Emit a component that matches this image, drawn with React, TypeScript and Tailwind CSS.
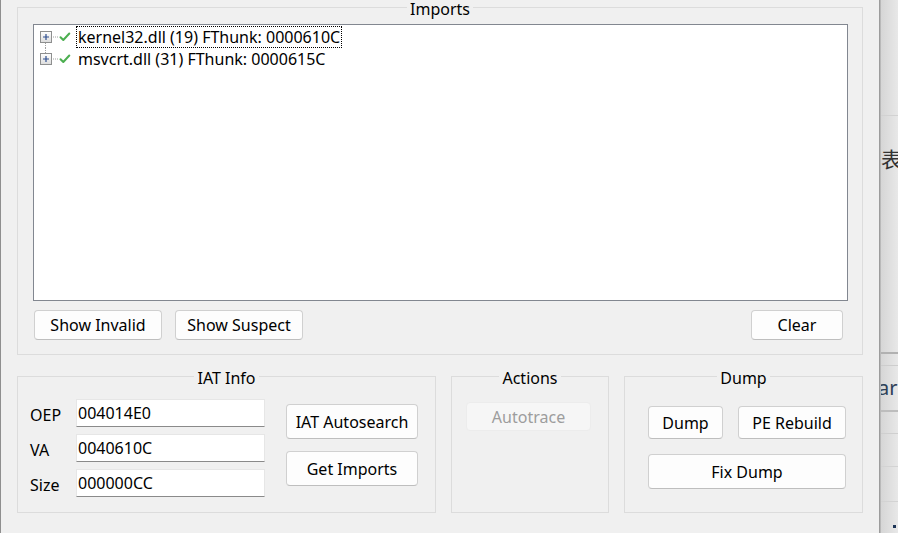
import React from 'react';

const font = "font-['Noto_Sans','Liberation_Sans',sans-serif]";

const btn =
  'flex items-center justify-center rounded-[4px] border border-[#d0d0d0] border-b-[#bebebe] bg-[#fdfdfd] text-black';

const Legend: React.FC<{ title: string }> = ({ title }) => (
  <legend className="mx-auto px-[3px] leading-[14px]">
    <span className="relative top-[2px]">{title}</span>
  </legend>
);

const TreeGlyph: React.FC<{ first: boolean; last: boolean }> = ({ first, last }) => (
  <svg width="36" height="22" viewBox="0 0 36 22" className="shrink-0 overflow-visible">
    <defs>
      <linearGradient id="pb" x1="0" y1="0" x2="0" y2="1">
        <stop offset="0" stopColor="#ffffff" />
        <stop offset="1" stopColor="#dcdcdc" />
      </linearGradient>
    </defs>
    {!first && <line x1="5.5" y1="0" x2="5.5" y2="5.5" stroke="#a0a0a0" strokeDasharray="1 1" />}
    {!last && <line x1="5.5" y1="17" x2="5.5" y2="22" stroke="#a0a0a0" strokeDasharray="1 1" />}
    <rect x="0.5" y="5.5" width="11" height="11" fill="url(#pb)" stroke="#8e8f8f" />
    <path d="M3 11h6M6 8v6" stroke="#2f4f8f" strokeWidth="1.2" />
    <line x1="13" y1="11" x2="18" y2="11" stroke="#a0a0a0" strokeDasharray="1 1" />
    <path d="M20.5 11.2l2.8 2.8 6-6.5" fill="none" stroke="#4caf50" strokeWidth="2" strokeLinecap="round" strokeLinejoin="round" />
  </svg>
);

const App: React.FC = () => {
  const fields = [
    { label: 'OEP', value: '004014E0' },
    { label: 'VA', value: '0040610C' },
    { label: 'Size', value: '000000CC' },
  ];

  return (
    <div className={`flex h-[533px] w-[898px] overflow-hidden bg-[#f0f0f0] text-[16px] text-black ${font}`}>
      <div className="w-px shrink-0 bg-[#8f8f8f]" />

      {/* dialog */}
      <div className="flex w-[878px] shrink-0 flex-col px-[16px]">
        <fieldset className="border border-[#dcdcdc] pt-[10px] pb-[14px]">
          <Legend title="Imports" />
          <div className="pl-[15px] pr-[14px]">
            <div className="h-[277px] border border-[#828790] bg-white pt-[1px]">
              <div className="flex h-[22px] items-center pl-[6px]">
                <TreeGlyph first last={false} />
                <span className="border border-dotted border-black px-[1px] leading-[20px]">
                  kernel32.dll (19) FThunk: 0000610C
                </span>
              </div>
              <div className="flex h-[22px] items-center pl-[6px]">
                <TreeGlyph first={false} last />
                <span className="border border-transparent px-[1px] leading-[20px]">
                  msvcrt.dll (31) FThunk: 0000615C
                </span>
              </div>
            </div>
            <div className="mt-[9px] flex pl-[1px] pr-[5px]">
              <button className={`${btn} h-[30px] w-[128px]`}>Show Invalid</button>
              <button className={`${btn} ml-[13px] h-[30px] w-[128px]`}>Show Suspect</button>
              <button className={`${btn} ml-auto h-[30px] w-[92px]`}>Clear</button>
            </div>
          </div>
        </fieldset>

        <div className="mt-[14px] flex gap-[15px]">
          <fieldset className="h-[144px] w-[419px] border border-[#dcdcdc] pt-[16px]">
            <Legend title="IAT Info" />
            <div className="flex pl-[12px]">
              <div className="flex flex-col gap-[7px]">
                {fields.map((f) => (
                  <div key={f.label} className="flex h-[28px] items-center">
                    <span className="w-[46px] pt-[4px]">{f.label}</span>
                    <div className="flex h-[28px] w-[189px] items-center border border-[#e6e6e6] border-b-[#8a8a8a] bg-white pl-[1px]">
                      {f.value}
                    </div>
                  </div>
                ))}
              </div>
              <div className="ml-[21px] mt-[5px] flex flex-col gap-[12px]">
                <button className={`${btn} h-[35px] w-[132px]`}>IAT Autosearch</button>
                <button className={`${btn} h-[35px] w-[132px]`}>Get Imports</button>
              </div>
            </div>
          </fieldset>

          <fieldset className="h-[144px] w-[158px] border border-[#dcdcdc] pt-[19px]">
            <Legend title="Actions" />
            <div className="pl-[14px]">
              <button className="flex h-[29px] w-[125px] items-center justify-center rounded-[4px] border border-[#ececec] bg-[#f6f6f6] text-[#9d9d9d]">
                Autotrace
              </button>
            </div>
          </fieldset>

          <fieldset className="h-[144px] w-[239px] border border-[#dcdcdc] pt-[23px]">
            <Legend title="Dump" />
            <div className="pl-[23px]">
              <div className="flex gap-[15px]">
                <button className={`${btn} h-[33px] w-[75px]`}>Dump</button>
                <button className={`${btn} h-[33px] w-[108px]`}>PE Rebuild</button>
              </div>
              <button className={`${btn} mt-[15px] h-[35px] w-[198px]`}>Fix Dump</button>
            </div>
          </fieldset>
        </div>
      </div>

      {/* window edge */}
      <div className="w-px shrink-0 bg-[#9c9c9c]" />
      <div className="w-px shrink-0 bg-[#b9b9b9]" />

      {/* background window */}
      <div className="flex w-[17px] shrink-0 flex-col overflow-hidden bg-gradient-to-r from-[#d6d6d6] to-[#e8e8e8] text-[#2d3f57]">
        <div className="h-[116px] shrink-0 border-b border-[#d2d2d2]" />
        <div className="h-[236px] shrink-0 whitespace-nowrap pt-[29px] text-[21px] leading-[26px] font-['Noto_Sans_CJK_SC',sans-serif] text-[#333]">
          表
        </div>
        <div className="h-[14px] shrink-0 border-t-2 border-b border-t-[#b1b1b1] border-b-[#cdcdcd]" />
        <div className="-ml-[3px] h-[46px] shrink-0 whitespace-nowrap border-b-2 border-[#bdbdbd] pt-[11px] text-[20px] leading-[22px]">
          ar
        </div>
        <div className="h-[22px] shrink-0 border-b border-[#cfcfcf]" />
        <div className="h-[33px] shrink-0 border-b border-[#d3d3d3]" />
        <div className="h-[35px] shrink-0 border-b border-[#d3d3d3]" />
        <div className="flex-1 pl-[12px] pt-[23px]">
          <div className="h-[3px] w-[3px] bg-[#1d3557]" />
        </div>
      </div>
    </div>
  );
};

export default App;
